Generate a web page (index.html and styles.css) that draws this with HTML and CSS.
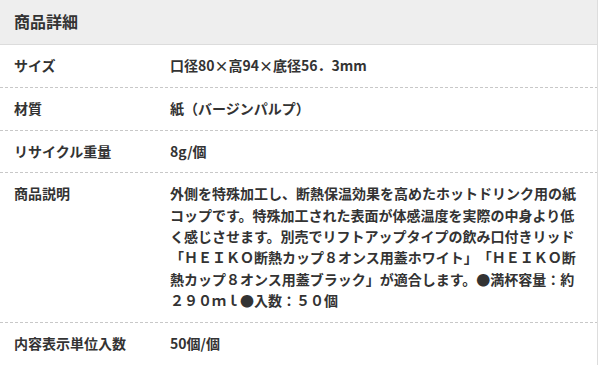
FILE: index.html
```html
<!DOCTYPE html>
<html lang="ja">
<head>
<meta charset="utf-8">
<title>商品詳細</title>
<link rel="stylesheet" href="styles.css">
</head>
<body>
<section class="spec">
  <h2 class="spec-title">商品詳細</h2>
  <dl class="spec-list">
    <div class="spec-row">
      <dt class="spec-label">サイズ</dt>
      <dd class="spec-value">口径80×高94×底径56．3mm</dd>
    </div>
    <div class="spec-row">
      <dt class="spec-label">材質</dt>
      <dd class="spec-value">紙（バージンパルプ）</dd>
    </div>
    <div class="spec-row">
      <dt class="spec-label">リサイクル重量</dt>
      <dd class="spec-value">8g/個</dd>
    </div>
    <div class="spec-row">
      <dt class="spec-label">商品説明</dt>
      <dd class="spec-value">外側を特殊加工し、断熱保温効果を高めたホットドリンク用の紙コップです。特殊加工された表面が体感温度を実際の中身より低く感じさせます。別売でリフトアップタイプの飲み口付きリッド「ＨＥＩＫＯ断熱カップ８オンス用蓋ホワイト」「ＨＥＩＫＯ断熱カップ８オンス用蓋ブラック」が適合します。●満杯容量：約２９０ｍｌ●入数：５０個</dd>
    </div>
    <div class="spec-row spec-row-last">
      <dt class="spec-label">内容表示単位入数</dt>
      <dd class="spec-value">50個/個</dd>
    </div>
  </dl>
</section>
</body>
</html>
```

FILE: styles.css
```css
html, body {
  margin: 0;
  padding: 0;
  background: #ffffff;
}

body {
  font-family: "Noto Sans CJK JP", "Noto Sans", sans-serif;
  color: #333333;
  text-spacing-trim: space-all;
}

.spec {
  width: 597px;
  border-right: 1px solid #dddddd;
  min-height: 365px;
}

.spec-title {
  margin: 0;
  height: 45px;
  padding: 0 14px 2px;
  display: flex;
  align-items: center;
  background: #eeeeee;
  border-bottom: 1px solid #dcdcdc;
  font-size: 16px;
  font-weight: 700;
  box-sizing: border-box;
}

.spec-list {
  margin: 0;
  padding: 0;
}

.spec-row {
  display: grid;
  grid-template-columns: 170px 1fr;
  padding: 10px 0 11.5px;
  background-image: linear-gradient(to right, #c8c8c8 60%, transparent 60%);
  background-size: 5px 1px;
  background-repeat: repeat-x;
  background-position: left bottom;
}

.spec-row-last {
  background-image: none;
}

.spec-label,
.spec-value {
  margin: 0;
  font-size: 14px;
  font-weight: 700;
  line-height: 21.3px;
  text-spacing-trim: space-all;
}

.spec-label {
  padding-left: 14px;
}

.spec-value {
  padding-right: 14px;
}
```
